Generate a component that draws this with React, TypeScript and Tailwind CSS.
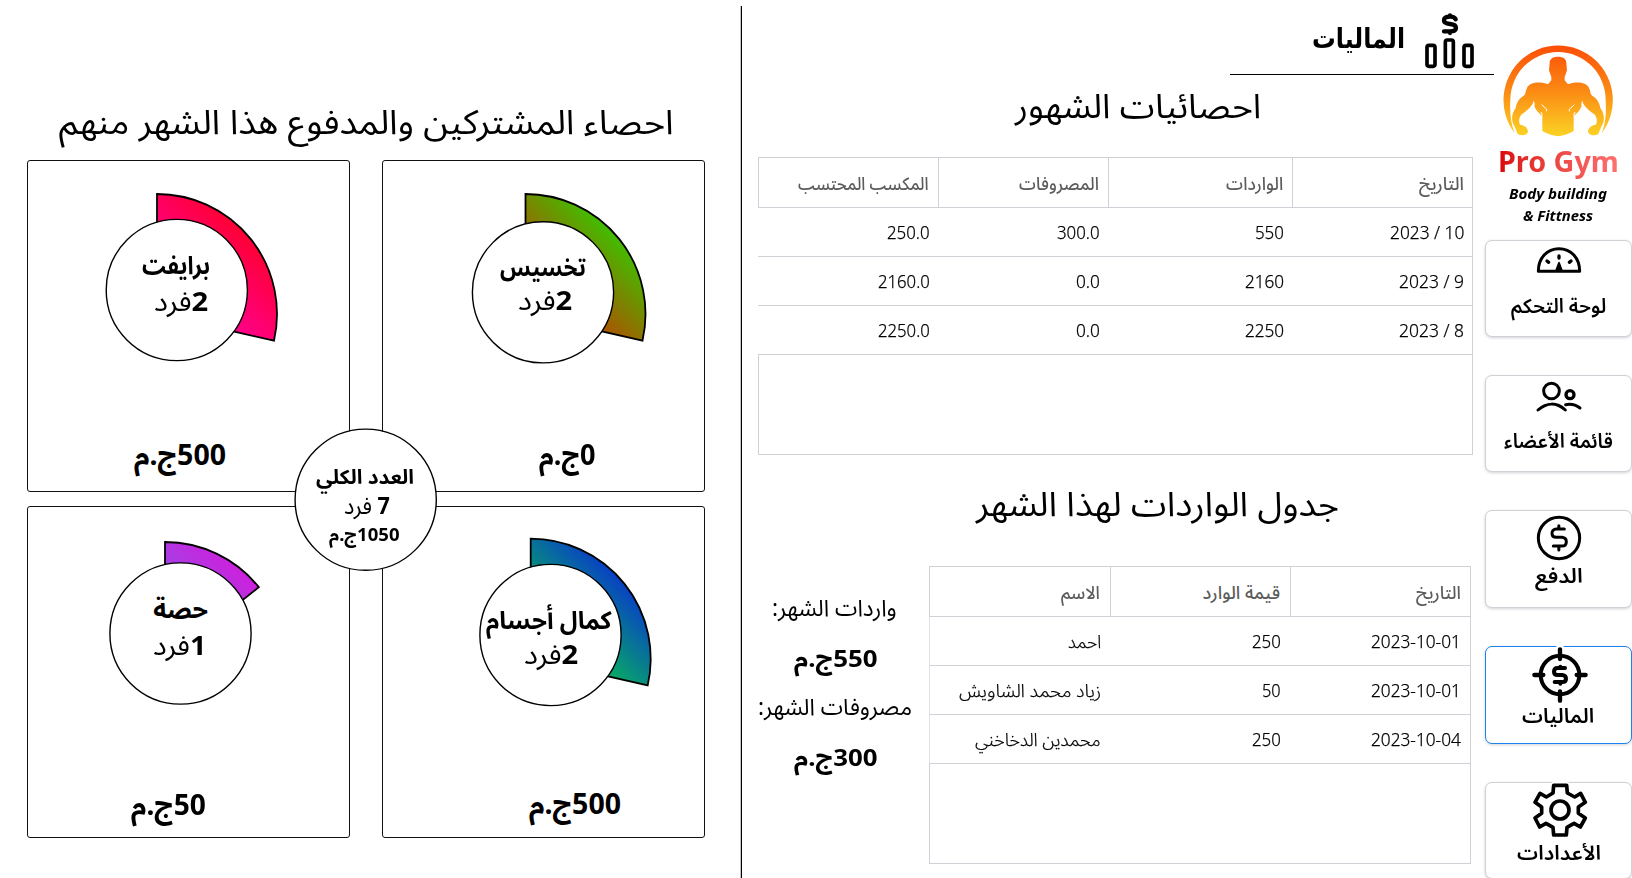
import { useLayoutEffect, useRef, useState } from "react";
import type { ReactNode } from "react";

/** One line of text stretched or condensed to a fixed width. */
function Line({
  w,
  className = "",
  textClass = "",
  ltr = false,
  children,
}: {
  w: number;
  className?: string;
  textClass?: string;
  ltr?: boolean;
  children: ReactNode;
}) {
  const ref = useRef<HTMLSpanElement>(null);
  const [scale, setScale] = useState(1);
  useLayoutEffect(() => {
    const el = ref.current;
    if (el) setScale(w / el.offsetWidth);
  }, [w]);
  return (
    <div dir="rtl" className={`shrink-0 whitespace-nowrap ${className}`} style={{ width: w }}>
      <span
        ref={ref}
        dir={ltr ? "ltr" : "rtl"}
        className={`block w-max origin-right ${textClass}`}
        style={{ transform: `scaleX(${scale})` }}
      >
        {children}
      </span>
    </div>
  );
}

type Plan = {
  name: string;
  nameWidth: number;
  nameClass: string;
  count: number;
  countWidth: number;
  countClass: string;
  amount: string;
  amountWidth: number;
  amountClass: string;
  pie: [number, number];
  circle: [number, number];
  share: number;
  from: string;
  to: string;
};

const plans: Plan[] = [
  {
    name: "برايفت",
    nameWidth: 68,
    nameClass: "mt-[83px] ml-[114px]",
    count: 2,
    countWidth: 54,
    countClass: "-mt-[1px] ml-[126px]",
    amount: "500ج.م",
    amountWidth: 92,
    amountClass: "mt-[115px] ml-[106px]",
    pie: [130, 154],
    circle: [149.8, 130],
    share: 2 / 7,
    from: "#ff00d0",
    to: "#ff0000",
  },
  {
    name: "تخسيس",
    nameWidth: 86,
    nameClass: "mt-[85px] ml-[117px]",
    count: 2,
    countWidth: 54,
    countClass: "-mt-[4px] ml-[135px]",
    amount: "0ج.م",
    amountWidth: 57,
    amountClass: "mt-[116px] ml-[156px]",
    pie: [143.5, 154],
    circle: [161, 132.3],
    share: 2 / 7,
    from: "#ff0000",
    to: "#00ff00",
  },
  {
    name: "حصة",
    nameWidth: 55,
    nameClass: "mt-[81px] ml-[125px]",
    count: 1,
    countWidth: 53,
    countClass: "-mt-[1px] ml-[125px]",
    amount: "50ج.م",
    amountWidth: 75,
    amountClass: "mt-[121px] ml-[103px]",
    pie: [138, 156],
    circle: [153.5, 127.5],
    share: 1 / 7,
    from: "#6473ec",
    to: "#f005d8",
  },
  {
    name: "كمال أجسام",
    nameWidth: 126,
    nameClass: "mt-[92px] ml-[103px]",
    count: 2,
    countWidth: 54,
    countClass: "-mt-[3px] ml-[141px]",
    amount: "500ج.م",
    amountWidth: 92,
    amountClass: "mt-[111px] ml-[146px]",
    pie: [148.7, 152.7],
    circle: [168.5, 129],
    share: 2 / 7,
    from: "#08ff18",
    to: "#0800ff",
  },
];

function PlanCard({ plan, index }: { plan: Plan; index: number }) {
  const [cx, cy] = plan.pie;
  const r = 120;
  const a = plan.share * Math.PI * 2;
  const x = cx + r * Math.sin(a);
  const y = cy - r * Math.cos(a);
  return (
    <div className="relative flex flex-col rounded-[3px] border border-[#111]">
      <svg className="absolute -top-px -left-px" width="323" height="332" fill="none" stroke="#000">
        <defs>
          <linearGradient
            id={`plan-${index}`}
            gradientUnits="userSpaceOnUse"
            x1={cx - 13}
            y1={cy + 13}
            x2={cx + 118}
            y2={cy - 118}
          >
            <stop offset="0" stopColor={plan.from} />
            <stop offset="1" stopColor={plan.to} />
          </linearGradient>
        </defs>
        <path
          d={`M${cx} ${cy}V${cy - r}A${r} ${r} 0 0 1 ${x} ${y}Z`}
          fill={`url(#plan-${index})`}
          strokeWidth="1.8"
        />
        <circle cx={plan.circle[0]} cy={plan.circle[1]} r="70.6" fill="#fff" strokeWidth="1.4" />
      </svg>
      <div className="relative flex flex-col">
        <Line w={plan.nameWidth} className={`text-[25px] leading-[40px] font-bold ${plan.nameClass}`}>
          {plan.name}
        </Line>
        <Line w={plan.countWidth} className={`text-[27px] leading-[36px] ${plan.countClass}`}>
          <b>{plan.count}</b>فرد
        </Line>
        <Line w={plan.amountWidth} className={`text-[28.5px] leading-[40px] font-bold ${plan.amountClass}`}>
          {plan.amount}
        </Line>
      </div>
    </div>
  );
}

type Cell = [string, number];

function Table({
  cols,
  cell,
  head,
  rows,
  openLeft = false,
}: {
  cols: string;
  cell: string;
  head: Cell[];
  rows: Cell[][];
  openLeft?: boolean;
}) {
  return (
    <div className="border-r border-[#d0d0d6]">
      <div className={`grid h-[51px] border-y border-l border-[#d0d0d6] ${cols}`}>
        {head.map(([text, w], i) => (
          <div
            key={i}
            className={`flex justify-end pt-[9px] ${cell} ${i < head.length - 1 ? "border-r border-[#d0d0d6]" : ""}`}
          >
            <Line w={w} className="text-[18px] leading-[32px] font-medium text-[#5c5c5c]">
              {text}
            </Line>
          </div>
        ))}
      </div>
      {rows.map((row, r) => (
        <div
          key={r}
          className={`grid h-[49px] border-b border-[#d0d0d6] ${openLeft ? "pl-px" : "border-l border-l-[#e2e2e6]"} ${cols}`}
        >
          {row.map(([text, w], i) => (
            <div key={i} className={`flex justify-end pt-[8px] ${cell}`}>
              <Line
                w={w}
                ltr={/^\d/.test(text)}
                className="text-[18px] leading-[32px] font-light text-black [-webkit-text-stroke:0.25px_#000]"
              >
                {text}
              </Line>
            </div>
          ))}
        </div>
      ))}
      <div className="h-[100px] border-b border-l border-[#d0d0d6]" />
    </div>
  );
}

function GaugeIcon() {
  return (
    <svg width="48" height="30" viewBox="195 45 144 90" fill="none" stroke="#000" strokeWidth="9" strokeLinejoin="round" strokeLinecap="round">
      <path d="M205 124C205 84 231 56 267 56S329 84 329 124Z" />
      <path d="M267 78V84M231 93L236 97M303 93L298 97" strokeWidth="10" />
      <path d="M267 98L258 122H276Z" fill="#000" strokeWidth="5" />
    </svg>
  );
}

function MembersIcon() {
  return (
    <svg width="48" height="36" viewBox="195 447 144 108" fill="none" stroke="#000" strokeWidth="9" strokeLinecap="round">
      <circle cx="244.5" cy="483" r="23.5" />
      <circle cx="300" cy="494" r="12" strokeWidth="10" />
      <path d="M204 540C230 517 260 516 286 540M287 524C303 521 317 524 330 534" />
    </svg>
  );
}

function PayIcon() {
  return (
    <svg width="48" height="48" viewBox="194 42 144 144" fill="none" stroke="#000" strokeWidth="9" strokeLinecap="round">
      <circle cx="266" cy="114" r="62" />
      <path d="M282 87H258C250 87 245 93 245 100C245 107 250 112 258 112H275C283 113 288 118 288 125C288 133 283 138 275 138H249M265.500 77V87M265.500 138V150" />
    </svg>
  );
}

function FinanceIcon() {
  return (
    <svg width="60" height="60" viewBox="179 437 180 180" fill="none" stroke="#000" strokeWidth="12" strokeLinecap="round">
      <path d="M269 440V470" stroke="#fff" strokeWidth="22" />
      <circle cx="269" cy="527" r="58" />
      <path d="M269 450V479M269 576V604M192 527H219M319 527H346" strokeWidth="13" />
      <path d="M284 506H262C255 506 251 510 251 517C251 523 255 527 262 527H276C283 528 287 532 287 538C287 544 283 548 276 548H253M270 502V506M270 548V553" />
    </svg>
  );
}

function SettingsIcon() {
  return (
    <svg width="58" height="58" viewBox="181 844 174 174" fill="none" stroke="#000" strokeWidth="11" strokeLinejoin="round">
      <path d="M244 850H294" stroke="#fff" strokeWidth="14" />
      <path d="M249 857H288L290 880L312 892L330 881L344 908L323 922V941L344 955L329 982L310 971L289 983L287 1006H249L247 983L226 971L207 982L193 955L213 941V922L193 908L208 881L227 892L247 880Z" />
      <circle cx="268" cy="931" r="27" />
    </svg>
  );
}

function ProfitIcon() {
  return (
    <svg width="52" height="58" viewBox="612 36 156 174" fill="none" stroke="#000" strokeWidth="13" strokeLinecap="round" strokeLinejoin="round">
      <path d="M707 58C704 51 698 50 690 50C678 50 672 54 672 61C672 68 678 71 690 72C702 73 708 77 708 84C708 91 702 94 690 94H672M690 46V50M690 94V99" />
      <rect x="621" y="136" width="24" height="63" rx="6" strokeWidth="11" />
      <rect x="676" y="120" width="24" height="79" rx="6" strokeWidth="11" />
      <rect x="732" y="136" width="24" height="63" rx="6" strokeWidth="11" />
    </svg>
  );
}

function GymLogo() {
  const half =
    "M1015 172C1000 172 990 178 990 191L988 213L995 233V243L985 255C962 246 930 248 922 266C917 276 919 284 912 289C897 298 890 312 888 326C874 346 874 366 886 384L894 404C905 411 920 409 925 398C924 385 915 378 901 376C895 362 901 350 907 344C922 334 935 324 943 305C941 322 950 336 968 350V395Q990 408 1015 411Z";
  return (
    <svg width="112" height="94" viewBox="847 134 336 282">
      <defs>
        <linearGradient id="flame" gradientUnits="userSpaceOnUse" x1="0" y1="138" x2="0" y2="411">
          <stop offset="0" stopColor="#fb4d07" />
          <stop offset="0.5" stopColor="#fb8a14" />
          <stop offset="1" stopColor="#fbd324" />
        </linearGradient>
      </defs>
      <g fill="url(#flame)">
        <path d="M885 402A164 164 0 1 1 1146 402C1158 372 1160 340 1158 302A143 144 0 0 0 872 302C870 340 873 372 885 402Z" />
        <path d={half} />
        <path d={half} transform="translate(2030 0) scale(-1 1)" />
      </g>
      <path d="M942 306L944 318M966 316L981 330V336M968 348L964 338M1088 306L1086 318M1064 316L1049 330V336M1062 348L1066 338" fill="none" stroke="#fff" strokeWidth="3" />
    </svg>
  );
}

function NavButton({
  label,
  w,
  boxClass = "h-[97px] border-[#d0d0d6]",
  iconClass,
  labelClass,
  children,
}: {
  label: string;
  w: number;
  boxClass?: string;
  iconClass: string;
  labelClass: string;
  children: ReactNode;
}) {
  return (
    <button
      className={`relative flex w-[147px] shrink-0 flex-col items-center rounded-[7px] border bg-white shadow-[0_1px_3px_rgba(0,0,40,0.18)] ${boxClass}`}
    >
      <span className={`relative flex justify-center ${iconClass}`}>{children}</span>
      <Line w={w} className={`relative text-[20px] leading-[30px] font-semibold ${labelClass}`}>
        {label}
      </Line>
    </button>
  );
}

export default function App() {
  return (
    <div className="flex h-[878px] w-[1632px] overflow-hidden bg-white font-['Noto_Sans','Noto_Sans_Arabic','DejaVu_Sans',sans-serif] text-black">
      <section className="relative flex w-[740px] shrink-0 flex-col">
        <h1 className="mt-[95px] ml-[59px] h-[52px]">
          <Line w={615} className="text-[34px] leading-[52px]">
            احصاء المشتركين والمدفوع هذا الشهر منهم
          </Line>
        </h1>
        <div className="mt-[13px] ml-[27px] grid grid-cols-[323px_323px] grid-rows-[332px_332px] gap-x-[32px] gap-y-[14px]">
          {plans.map((plan, i) => (
            <PlanCard key={plan.name} plan={plan} index={i} />
          ))}
        </div>
        <div className="absolute top-[428px] left-[294px] flex h-[143px] w-[143px] flex-col">
          <svg className="absolute inset-0" width="143" height="143">
            <circle cx="71.7" cy="71.7" r="70.6" fill="#fff" stroke="#000" strokeWidth="1.4" />
          </svg>
          <Line w={98} className="relative mt-[33px] ml-[22px] text-[20px] leading-[32px] font-bold">
            العدد الكلي
          </Line>
          <Line w={46} className="relative mt-0 ml-[50px] text-[23px] leading-[24px]">
            <b>7</b> فرد
          </Line>
          <Line w={70} className="relative mt-[5px] ml-[35px] text-[18px] leading-[24px] font-bold">
            1050ج.م
          </Line>
        </div>
      </section>

      <div className="mt-[6px] w-[2px] shrink-0 border-l border-l-[#c4c4c4] bg-black" />

      <main className="flex w-[743px] shrink-0 flex-col">
        <header className="mr-[-9px] ml-auto flex h-[75px] w-[264px] shrink-0 justify-end border-b border-black">
          <h2 className="mt-[16px]">
            <Line w={93} className="font-['DejaVu_Sans',sans-serif] text-[28px] leading-[46px] font-bold">
              الماليات
            </Line>
          </h2>
          <span className="mt-[12px] mr-[18px] ml-[19px]">
            <ProfitIcon />
          </span>
        </header>
        <h2 className="mt-[4px] ml-[273px] h-[52px]">
          <Line w={246} className="text-[34px] leading-[52px]">
            احصائيات الشهور
          </Line>
        </h2>
        <div className="mt-[26px] ml-[16px] w-[715px]">
          <Table
            openLeft
            cols="grid-cols-[180px_170px_184px_180px]"
            cell="pr-[9px]"
            head={[
              ["المكسب المحتسب", 131],
              ["المصروفات", 80],
              ["الواردات", 57],
              ["التاريخ", 45],
            ]}
            rows={[
              [["250.0", 43], ["300.0", 43], ["550", 29], ["2023 / 10", 74]],
              [["2160.0", 52], ["0.0", 24], ["2160", 39], ["2023 / 9", 65]],
              [["2250.0", 52], ["0.0", 24], ["2250", 39], ["2023 / 8", 65]],
            ]}
          />
        </div>
        <h2 className="mt-[22px] ml-[234px] h-[52px]">
          <Line w={363} className="text-[34px] leading-[52px]">
            جدول الواردات لهذا الشهر
          </Line>
        </h2>
        <div className="mt-[37px] flex">
          <aside className="flex w-[187px] shrink-0 flex-col pt-[21px]">
            <Line w={125} className="ml-[30px] text-[23px] leading-[40px]">
              واردات الشهر:
            </Line>
            <Line w={84} className="mt-[11px] ml-[52px] text-[24px] leading-[40px] font-bold">
              550ج.م
            </Line>
            <Line w={154} className="mt-[8px] ml-[16px] text-[23px] leading-[40px]">
              مصروفات الشهر:
            </Line>
            <Line w={84} className="mt-[11px] ml-[52px] text-[24px] leading-[40px] font-bold">
              300ج.م
            </Line>
          </aside>
          <div className="w-[542px]">
            <Table
              cols="grid-cols-[181px_180px_180px]"
              cell="pr-[10px]"
              head={[
                ["الاسم", 39],
                ["قيمة الوارد", 77],
                ["التاريخ", 45],
              ]}
              rows={[
                [["احمد", 33], ["250", 29], ["2023-10-01", 90]],
                [["زياد محمد الشاويش", 142], ["50", 19], ["2023-10-01", 90]],
                [["محمدين الدخاخني", 126], ["250", 29], ["2023-10-04", 90]],
              ]}
            />
          </div>
        </div>
      </main>

      <nav className="flex w-[147px] shrink-0 flex-col">
        <div className="flex h-[240px] shrink-0 flex-col">
          <div className="mt-[44px] ml-[17px] h-[94px]">
            <GymLogo />
          </div>
          <Line
            ltr
            w={121}
            className="mt-[3px] ml-[13px] text-[29px] leading-[40px] font-bold"
            textClass="bg-gradient-to-r from-[#d90008] to-[#ff7070] bg-clip-text text-transparent"
          >
            Pro Gym
          </Line>
          <Line ltr w={98} className="mt-[1px] ml-[24px] text-[15px] leading-[22px] font-bold italic">
            Body building
          </Line>
          <Line ltr w={70} className="ml-[38px] text-[15px] leading-[22px] font-bold italic">
            &amp; Fittness
          </Line>
        </div>
        <div className="flex flex-col gap-[38px]">
          <NavButton label="لوحة التحكم" w={95} iconClass="mt-[4px] ml-[1px] h-[30px]" labelClass="mt-[16px]">
            <GaugeIcon />
          </NavButton>
          <NavButton label="قائمة الأعضاء" w={109} iconClass="mt-[3px] ml-[1px] h-[36px]" labelClass="mt-[11px]">
            <MembersIcon />
          </NavButton>
          <NavButton
            label="الدفع"
            w={48}
            boxClass="h-[98px] border-[#d0d0d6]"
            iconClass="mt-[3px] h-[48px]"
            labelClass="-mt-[1px]"
          >
            <PayIcon />
          </NavButton>
          <NavButton
            label="الماليات"
            w={72}
            boxClass="h-[98px] border-[#1a82f0]"
            iconClass="-mt-[2px] ml-[2px] h-[60px]"
            labelClass="-mt-[4px]"
          >
            <FinanceIcon />
          </NavButton>
          <NavButton label="الأعدادات" w={84} iconClass="-mt-[2px] ml-[2px] h-[58px]" labelClass="-mt-[1px]">
            <SettingsIcon />
          </NavButton>
        </div>
      </nav>
    </div>
  );
}
